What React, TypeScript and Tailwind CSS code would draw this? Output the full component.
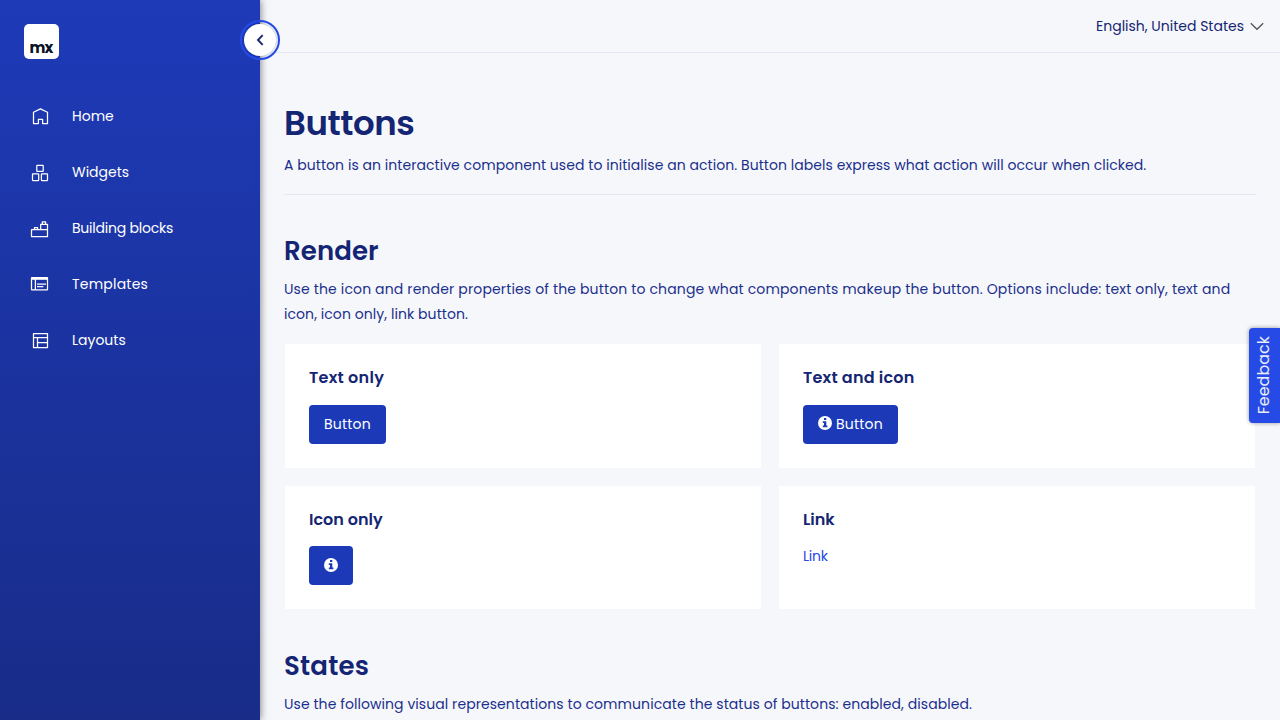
import type { ReactNode } from 'react';

function Icon({ children }: { children: ReactNode }) {
  return (
    <svg className="size-5 shrink-0" viewBox="0 0 20 20" fill="none" stroke="white" strokeWidth="1.25" strokeLinejoin="round">
      {children}
    </svg>
  );
}

const navItems: { label: string; tracking: string; icon: ReactNode }[] = [
  {
    label: 'Home',
    tracking: 'tracking-normal',
    icon: <path d="M3.5 17.5V6.2L10.4 2.9L17.5 6.2V17.5H12.6V13.4H8.4V17.5Z" />,
  },
  {
    label: 'Widgets',
    tracking: 'tracking-normal',
    icon: (
      <>
        <rect x="6.8" y="3.4" width="6.4" height="6" rx="0.4" />
        <rect x="2.5" y="11.9" width="6.2" height="6.6" rx="0.4" />
        <rect x="11.4" y="11.9" width="6.1" height="6.6" rx="0.4" />
      </>
    ),
  },
  {
    label: 'Building blocks',
    tracking: 'tracking-[-0.22px]',
    icon: <path d="M1.5 11.7H17.5V18.5H1.5ZM10.7 11.7V6.3H17.5V11.7M12.3 6.3V3.9H15.6V6.3M4.5 11.7V9.5H7.6V11.7" />,
  },
  {
    label: 'Templates',
    tracking: 'tracking-[0.22px]',
    icon: (
      <>
        <rect x="1.5" y="3.5" width="16" height="12.4" rx="0.4" />
        <path d="M1.5 4.5H17.5" strokeWidth="2.6" />
        <path d="M5.4 5V16M7 10.2H16M7 12.7H13.4" />
      </>
    ),
  },
  {
    label: 'Layouts',
    tracking: 'tracking-normal',
    icon: <path d="M3.5 3.5H17.5V17.5H3.5ZM3.5 7.5H17.5M7.5 7.5V17.5M7.5 12.5H17.5" />,
  },
];

function InfoIcon({ className = '' }: { className?: string }) {
  return (
    <svg className={`size-3.5 shrink-0 ${className}`} viewBox="0 0 14 14">
      <circle cx="7" cy="7" r="7" fill="white" />
      <path d="M6 2.1H8.3V4.1H6ZM4.8 5.3H8.3V9.6H9.4V11.2H4.8V9.6H6V6.9H4.8Z" fill="#1c3ab7" />
    </svg>
  );
}

function Card({ title, tracking = 'tracking-normal', children }: { title: string; tracking?: string; children: ReactNode }) {
  return (
    <div className="flex flex-col items-start bg-white px-6 pt-[23px]">
      <h3 className={`text-[16px] leading-[21px] font-semibold ${tracking}`}>{title}</h3>
      {children}
    </div>
  );
}

const buttonClass = 'flex h-[39px] items-center rounded-[4px] bg-[#1c3ab7] px-[15px] text-[14px] leading-[21px] tracking-[0.2px] text-white';

export default function App() {
  return (
    <div className="flex h-[720px] w-[1280px] overflow-hidden bg-[#f6f7fb] font-['Poppins','Inter',sans-serif] text-[14px] text-[#142573]">
      <aside className="relative z-10 flex w-[260px] shrink-0 flex-col bg-linear-to-b from-[#1e3ab8] to-[#182c88] shadow-[0_0_8px_rgba(0,0,0,0.55)]">
        <div className="mt-6 ml-6 flex size-[35px] items-end rounded-[5px] bg-white pb-px pl-[5.5px]">
          <span className="text-[15px] leading-[20px] font-bold tracking-[-1px] text-[#0a1326]">mx</span>
        </div>
        <nav className="mt-[29px] flex flex-col">
          {navItems.map((item) => (
            <a key={item.label} className="flex h-14 items-center gap-[22px] pl-[30px] text-white">
              <Icon>{item.icon}</Icon>
              <span className={item.tracking}>{item.label}</span>
            </a>
          ))}
        </nav>
        <button className="absolute top-5 -right-5 flex size-10 items-center justify-center rounded-full border-2 border-[#264ae5]">
          <span className="flex size-8 items-center justify-center rounded-full bg-white shadow-[0_0_3px_rgba(20,37,115,0.35)]">
            <svg className="size-4" viewBox="0 0 16 16" fill="none" stroke="#142573" strokeWidth="1.9">
              <path d="M10.7 3.2L6 8L10.7 12.8" />
            </svg>
          </span>
        </button>
      </aside>

      <div className="flex min-w-0 grow flex-col">
        <header className="flex h-[53px] shrink-0 items-center justify-end gap-1.5 border-b border-[#e4e6f4] pr-4">
          <span>English, United States</span>
          <svg className="h-[14px] w-[14px]" viewBox="0 0 14 14" fill="none" stroke="#4f5054" strokeWidth="1.2">
            <path d="M0.8 4.2L7 10.3L13.2 4.2" />
          </svg>
        </header>

        <main className="flex flex-col px-6">
          <h1 className="mt-[48px] text-[34px] leading-[45px] font-semibold tracking-[-0.45px]">Buttons</h1>
          <p className="mt-[7px] leading-[25px] tracking-[0.05px] text-[#1b2f8d]">
            A button is an interactive component used to initialise an action. Button labels express what action will occur when clicked.
          </p>
          <hr className="mt-4 border-[#e4e6f4]" />

          <h2 className="mt-[39px] text-[26px] leading-[34px] font-semibold tracking-[0.1px]">Render</h2>
          <p className="mt-[9px] leading-[25px] tracking-[0.144px] text-[#1b2f8d]">
            Use the icon and render properties of the button to change what components makeup the button. Options include: text only, text and{' '}
            <span className="tracking-[0.07px]">icon, icon only, link button.</span>
          </p>

          <div className="mx-px mt-[17px] grid grid-cols-2 grid-rows-[124px_123px] gap-[18px]">
            <Card title="Text only" tracking="tracking-[0.27px]">
              <button className={`mt-[17px] ${buttonClass}`}>Button</button>
            </Card>
            <Card title="Text and icon" tracking="tracking-[0.22px]">
              <button className={`mt-[17px] gap-1 ${buttonClass}`}>
                <InfoIcon className="mb-[3px]" />
                Button
              </button>
            </Card>
            <Card title="Icon only">
              <button className={`mt-4 ${buttonClass}`}>
                <InfoIcon className="mb-px" />
              </button>
            </Card>
            <Card title="Link">
              <a className="mt-[14px] leading-[25px] tracking-[-0.2px] text-[#264ae5]">Link</a>
            </Card>
          </div>

          <h2 className="mt-[40px] text-[26px] leading-[34px] font-semibold tracking-[0.2px]">States</h2>
          <p className="mt-[9px] leading-[25px] tracking-[0.07px] text-[#1b2f8d]">
            Use the following visual representations to communicate the status of buttons: enabled, disabled.
          </p>
        </main>
      </div>

      <div className="absolute top-[328px] left-[1249px] z-20 flex h-[95px] w-[31px] items-center justify-center rounded-l-[4px] bg-[#264ae5] pr-[2px] shadow-[0_0_4px_rgba(0,0,0,0.4)]">
        <span className="rotate-180 text-[16px] leading-[24px] text-white/90 [writing-mode:vertical-rl]">Feedback</span>
      </div>
    </div>
  );
}
